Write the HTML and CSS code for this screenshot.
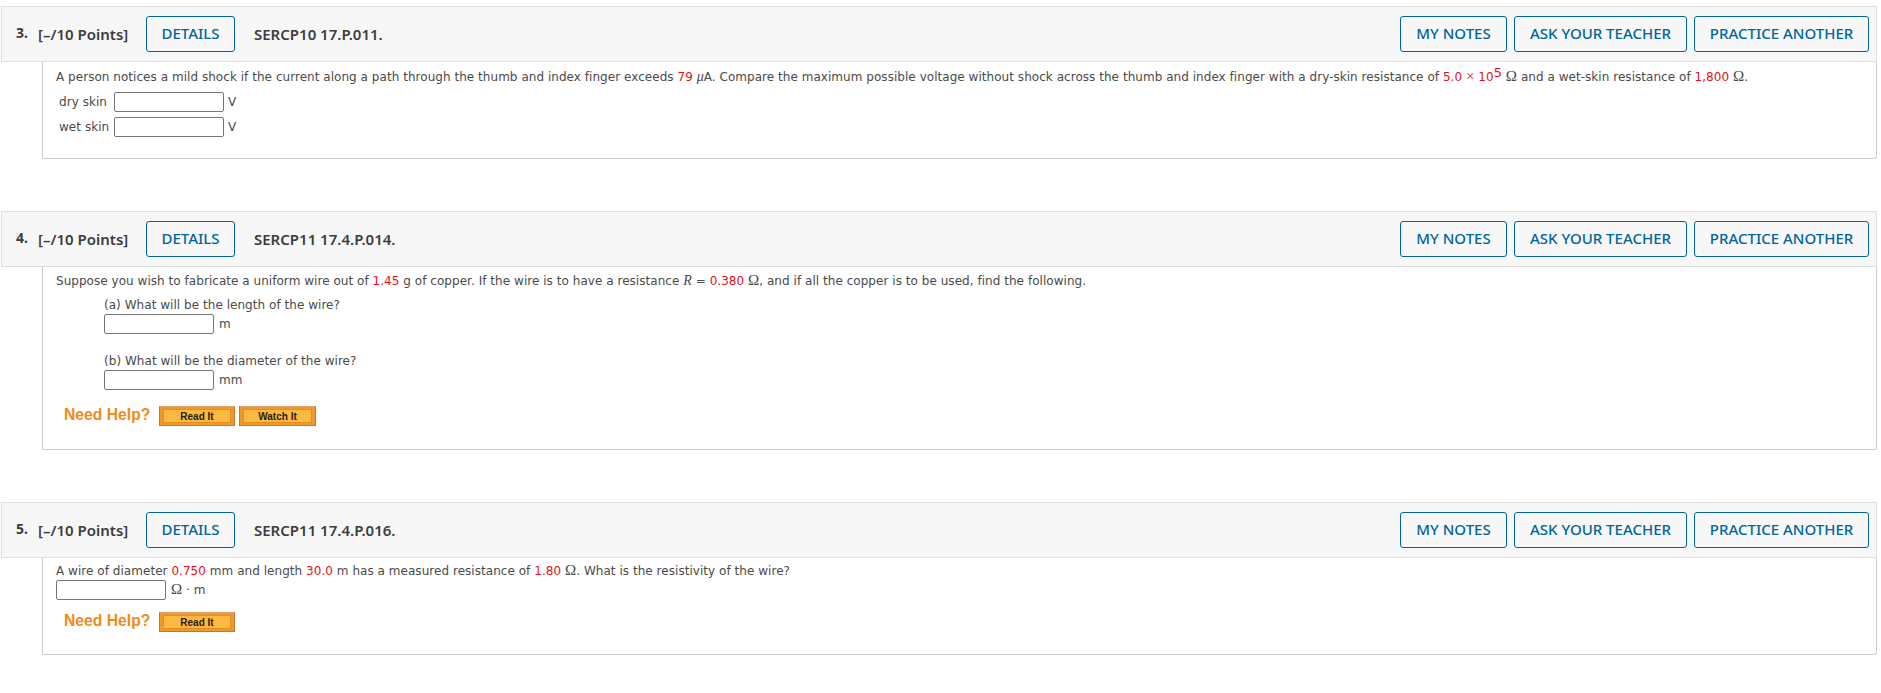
FILE: index.html
```html
<!DOCTYPE html>
<html lang="en">
<head>
    <meta charset="UTF-8">
    <meta name="viewport" content="width=device-width, initial-scale=1.0">
    <title>Assignment Questions</title>
    <link rel="stylesheet" href="styles.css">
</head>
<body>
    <div class="question q3">
        <div class="question-head">
            <span class="num">3.</span>
            <span class="points">[&ndash;/10 Points]</span>
            <a class="btn btn-details">DETAILS</a>
            <span class="code">SERCP10 17.P.011.</span>
            <div class="head-actions">
                <a class="btn btn-notes">MY NOTES</a>
                <a class="btn btn-ask">ASK YOUR TEACHER</a>
                <a class="btn btn-practice">PRACTICE ANOTHER</a>
            </div>
        </div>
        <div class="question-body">
            <p class="text">A person notices a mild shock if the current along a path through the thumb and index finger exceeds <span class="val">79</span> <span class="mu">&mu;</span>A. Compare the maximum possible voltage without shock across the thumb and index finger with a dry-skin resistance of <span class="val">5.0 <span class="times">&times;</span> 10<sup>5</sup></span> <span class="ohm">&Omega;</span> and a wet-skin resistance of <span class="val">1,800</span> <span class="ohm">&Omega;</span>.</p>
            <div class="skin-row">
                <label class="skin-label">dry skin</label>
                <input class="answer" type="text">
                <span class="unit">V</span>
            </div>
            <div class="skin-row">
                <label class="skin-label">wet skin</label>
                <input class="answer" type="text">
                <span class="unit">V</span>
            </div>
        </div>
    </div>

    <div class="question q4">
        <div class="question-head">
            <span class="num">4.</span>
            <span class="points">[&ndash;/10 Points]</span>
            <a class="btn btn-details">DETAILS</a>
            <span class="code">SERCP11 17.4.P.014.</span>
            <div class="head-actions">
                <a class="btn btn-notes">MY NOTES</a>
                <a class="btn btn-ask">ASK YOUR TEACHER</a>
                <a class="btn btn-practice">PRACTICE ANOTHER</a>
            </div>
        </div>
        <div class="question-body">
            <p class="text">Suppose you wish to fabricate a uniform wire out of <span class="val">1.45</span> g of copper. If the wire is to have a resistance <span class="var">R</span> = <span class="val">0.380</span> <span class="ohm">&Omega;</span>, and if all the copper is to be used, find the following.</p>
            <div class="part">
                <p class="part-text">(a) What will be the length of the wire?</p>
                <div class="answer-row">
                    <input class="answer" type="text">
                    <span class="unit">m</span>
                </div>
            </div>
            <div class="part part-b">
                <p class="part-text">(b) What will be the diameter of the wire?</p>
                <div class="answer-row">
                    <input class="answer" type="text">
                    <span class="unit">mm</span>
                </div>
            </div>
            <div class="help">
                <span class="help-label">Need Help?</span>
                <a class="help-btn"><span>Read It</span></a>
                <a class="help-btn help-btn-watch"><span>Watch It</span></a>
            </div>
        </div>
    </div>

    <div class="question q5">
        <div class="question-head">
            <span class="num">5.</span>
            <span class="points">[&ndash;/10 Points]</span>
            <a class="btn btn-details">DETAILS</a>
            <span class="code">SERCP11 17.4.P.016.</span>
            <div class="head-actions">
                <a class="btn btn-notes">MY NOTES</a>
                <a class="btn btn-ask">ASK YOUR TEACHER</a>
                <a class="btn btn-practice">PRACTICE ANOTHER</a>
            </div>
        </div>
        <div class="question-body">
            <p class="text">A wire of diameter <span class="val">0.750</span> mm and length <span class="val">30.0</span> m has a measured resistance of <span class="val">1.80</span> <span class="ohm">&Omega;</span>. What is the resistivity of the wire?</p>
            <div class="answer-row answer-row-tight">
                <input class="answer" type="text">
                <span class="unit"><span class="ohm">&Omega;</span> &middot; m</span>
            </div>
            <div class="help">
                <span class="help-label">Need Help?</span>
                <a class="help-btn"><span>Read It</span></a>
            </div>
        </div>
    </div>
</body>
</html>
```

FILE: styles.css
```css
body {
    margin: 0;
    padding: 6px 4px 0 1px;
    background-color: #fff;
    font-family: "DejaVu Sans", Verdana, sans-serif;
    font-size: 12px;
    letter-spacing: 0.04px;
    color: #4a4a4a;
}

.question {
    margin-bottom: 52px;
}

.question-head {
    display: flex;
    align-items: center;
    height: 54px;
    padding: 0 7px 0 0;
    background-color: #f7f7f7;
    border: 1px solid #dedede;
    font-family: "Noto Sans", "Open Sans", sans-serif;
    font-weight: 600;
    font-size: 15px;
    letter-spacing: 0;
    color: #3d3d3d;
    white-space: nowrap;
}

.num {
    width: 22px;
    margin-left: 14px;
    padding-bottom: 3px;
    font-size: 14px;
    font-weight: 700;
}

.points {
    width: 108px;
    padding-bottom: 1px;
}

.code {
    margin-left: 19px;
    padding-bottom: 1px;
}

.btn {
    display: flex;
    align-items: center;
    justify-content: center;
    box-sizing: border-box;
    height: 36px;
    padding-bottom: 2px;
    border: 1px solid #00659c;
    border-radius: 3px;
    color: #00659c;
    font-weight: 500;
}

.btn-details {
    width: 89px;
}

.head-actions {
    display: flex;
    gap: 7px;
    margin-left: auto;
}

.btn-notes {
    width: 107px;
}

.btn-ask {
    width: 173px;
}

.btn-practice {
    width: 175px;
}

.question-body {
    margin-left: 41px;
    padding: 6px 0 0 13px;
    border: 1px solid #cccccc;
    border-top: none;
    border-bottom-right-radius: 3px;
    box-sizing: border-box;
}

.q3 .question-body {
    height: 97px;
}

.q4 .question-body {
    height: 183px;
}

.q5 .question-body {
    height: 97px;
    padding-top: 5px;
}

.text {
    margin: 0;
    line-height: 16px;
    white-space: nowrap;
}

.q3 .text {
    height: 18px;
    padding-top: 1px;
}

.val {
    color: #e2111b;
}

.times {
    font-family: "Liberation Serif", "Times New Roman", serif;
    font-size: 15px;
    line-height: 0;
}

sup {
    font-size: 13px;
    line-height: 0;
    vertical-align: 4px;
}

.ohm {
    font-family: "Liberation Serif", "Times New Roman", serif;
    font-size: 15px;
    line-height: 0;
}

.mu,
.var {
    font-family: "Liberation Serif", "Times New Roman", serif;
    font-style: italic;
    font-size: 14px;
    line-height: 0;
}

.skin-row {
    display: flex;
    align-items: center;
    height: 20px;
    margin-top: 5px;
}

.skin-label {
    width: 58px;
    padding-left: 3px;
    box-sizing: border-box;
    margin-top: -1px;
}

.answer {
    box-sizing: border-box;
    width: 110px;
    height: 20px;
    padding: 0;
    background: #fff;
    border: 1px solid #767676;
    border-radius: 2px;
}

.unit {
    margin-left: 4px;
}

.answer-row {
    display: flex;
    align-items: center;
    height: 20px;
}

.answer-row .unit {
    margin-left: 5px;
}

.answer-row-tight {
    margin-top: 1px;
}

.part {
    margin: 8px 0 0 48px;
}

.part-b {
    margin-top: 19px;
}

.part-text {
    margin: 0 0 1px;
    line-height: 16px;
}

.help {
    display: flex;
    align-items: center;
    height: 20px;
    margin: 16px 0 0 8px;
}

.q5 .help {
    margin-top: 12px;
}

.help-label {
    width: 95px;
    padding-bottom: 2px;
    font-family: "Liberation Sans", Arial, sans-serif;
    font-weight: 700;
    font-size: 15.7px;
    letter-spacing: 0;
    color: #f28a1b;
}

/* orange beveled button */
.help-btn {
    box-sizing: border-box;
    display: block;
    width: 76px;
    height: 20px;
    margin-right: 4px;
    padding: 2px 3px;
    background-color: #f0982e;
    border: 1px solid #c07a30;
    border-top-color: #e0a468;
}

.help-btn span {
    display: flex;
    align-items: center;
    justify-content: center;
    box-sizing: border-box;
    height: 14px;
    background-color: #fdb93f;
    border: 1px solid #e08f25;
    font-family: "Liberation Sans", Arial, sans-serif;
    font-weight: 700;
    font-size: 10px;
    letter-spacing: 0;
    color: #2a2010;
}

.help-btn-watch {
    width: 77px;
}
```
